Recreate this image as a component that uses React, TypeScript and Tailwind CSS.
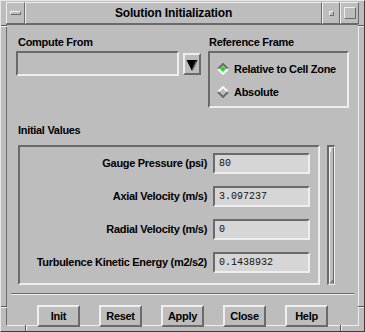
import React from "react";

const label = "whitespace-nowrap text-[11px] font-bold leading-[13px] tracking-[-0.3px] text-black";
const raised = "border-[#eeeeee] border-r-[#6a6a6a] border-b-[#6a6a6a]";
const sunken = "border-[#6a6a6a] border-r-[#eeeeee] border-b-[#eeeeee]";

const initialValues: [string, string][] = [
  ["Gauge Pressure (psi)", "80"],
  ["Axial Velocity (m/s)", "3.097237"],
  ["Radial Velocity (m/s)", "0"],
  ["Turbulence Kinetic Energy (m2/s2)", "0.1438932"],
];

function Diamond({ selected }: { selected?: boolean }) {
  const tl = selected ? "#6a6a6a" : "#f4f4f4";
  const br = selected ? "#f4f4f4" : "#6a6a6a";
  return (
    <svg width="12" height="12" viewBox="0 0 12 12" className="shrink-0">
      <polygon points="6,1 11,6 6,11 1,6" fill={selected ? "#c4c4c4" : "#bdbdbd"} />
      <polyline points="1,6 6,1 11,6" fill="none" stroke={tl} strokeWidth="2" />
      <polyline points="1,6 6,11 11,6" fill="none" stroke={br} strokeWidth="2" />
      {selected && <polygon points="6,3.5 8.5,6 6,8.5 3.5,6" fill="#00ee00" />}
    </svg>
  );
}

function FrameTicks() {
  return (
    <>
      {/* resize handle marks on the window frame */}
      <div className="absolute left-0 top-[24px] h-[1px] w-[6px] bg-[#5a5a5a]" />
      <div className="absolute left-0 top-[25px] h-[1px] w-[6px] bg-[#eeeeee]" />
      <div className="absolute left-0 top-[305px] h-[1px] w-[6px] bg-[#5a5a5a]" />
      <div className="absolute left-0 top-[306px] h-[1px] w-[6px] bg-[#eeeeee]" />
      <div className="absolute right-0 top-[24px] h-[1px] w-[6px] bg-[#5a5a5a]" />
      <div className="absolute right-0 top-[25px] h-[1px] w-[6px] bg-[#eeeeee]" />
      <div className="absolute right-0 top-[305px] h-[1px] w-[6px] bg-[#5a5a5a]" />
      <div className="absolute right-0 top-[306px] h-[1px] w-[6px] bg-[#eeeeee]" />
      <div className="absolute bottom-0 left-[24px] h-[6px] w-[1px] bg-[#5a5a5a]" />
      <div className="absolute bottom-0 left-[25px] h-[6px] w-[1px] bg-[#eeeeee]" />
      <div className="absolute bottom-0 left-[339px] h-[6px] w-[1px] bg-[#5a5a5a]" />
      <div className="absolute bottom-0 left-[340px] h-[6px] w-[1px] bg-[#eeeeee]" />
    </>
  );
}

function TitleBar() {
  return (
    <div className="flex h-[22px]">
      <div className={`flex w-[19px] items-center justify-center border ${raised}`}>
        <div className={`h-[4px] w-[11px] border ${raised}`} />
      </div>
      <div
        className={`flex flex-1 items-center justify-center border ${raised} text-[12px] font-bold tracking-[-0.15px] text-black`}
      >
        Solution Initialization
      </div>
      <div className={`flex w-[18px] items-center justify-center border ${raised}`}>
        <div className={`h-[5px] w-[5px] border ${raised}`} />
      </div>
      <div className={`flex w-[19px] items-center justify-center border ${raised}`}>
        <div className={`h-[12px] w-[12px] border ${raised}`} />
      </div>
    </div>
  );
}

function DropButton() {
  return (
    <div className={`ml-[4px] h-[22px] w-[18px] border-2 ${raised}`}>
      <svg width="14" height="18" viewBox="0 0 14 18">
        <polygon points="1.5,5 12.5,5 7,16" fill="#000" />
        <polyline points="11.5,6 7.5,14.5" fill="none" stroke="#5f5f5f" strokeWidth="1.5" />
      </svg>
    </div>
  );
}

function ValueRow({ name, value }: { name: string; value: string }) {
  return (
    <div className="flex items-center gap-[6px]">
      <span className={label}>{name}</span>
      <div
        className={`h-[21px] w-[97px] border-2 ${sunken} bg-[#d6d6d6] pl-[4px] font-['Liberation_Mono',monospace] text-[10px] leading-[17px] text-[#111]`}
      >
        {value}
      </div>
    </div>
  );
}

function ScrollBar() {
  return (
    <div className={`ml-[7px] flex h-[140px] w-[8px] border-2 border-r border-b ${sunken}`}>
      <div className={`relative h-full w-full border-l border-r ${raised}`}>
        <svg className="absolute left-0 top-0" width="4" height="6" viewBox="0 0 4 6">
          <polyline points="0.5,5 0.5,0.5 3.5,0.5" fill="none" stroke="#eeeeee" strokeWidth="1" />
        </svg>
        <svg className="absolute bottom-0 left-0" width="4" height="6" viewBox="0 0 4 6">
          <polyline points="0.5,5.5 3.5,2" fill="none" stroke="#6a6a6a" strokeWidth="1.2" />
        </svg>
      </div>
    </div>
  );
}

const buttons = ["Init", "Reset", "Apply", "Close", "Help"];

export default function App() {
  return (
    <div
      className="relative h-[332px] w-[365px] overflow-hidden border border-[#e6e6e6] border-r-[#3c3c3c] border-b-[#3c3c3c] bg-[#bdbdbd] px-[5px] pt-[1px] pb-[5px] font-['Liberation_Sans',Arial,sans-serif]"
    >
      <FrameTicks />
      <TitleBar />

      <div className={`flex h-[302px] flex-col border ${sunken}`}>
        <div className="flex gap-[7px] pl-[9px] pt-[11px]">
          <div className="flex w-[185px] flex-col">
            <span className={`${label} ml-[2px]`}>Compute From</span>
            <div className="mt-[2px] flex items-center">
              <div className={`h-[25px] w-[163px] border-2 ${sunken}`} />
              <DropButton />
            </div>
          </div>

          <div className="flex w-[141px] flex-col">
            <span className={`${label} ml-[1px]`}>Reference Frame</span>
            <div className={`mt-[2px] flex h-[57px] flex-col gap-[7px] border-2 ${sunken} pl-[7px] pt-[8px]`}>
              <div className="flex h-[16px] items-center gap-[5px]">
                <Diamond selected />
                <span className={label}>Relative to Cell Zone</span>
              </div>
              <div className="flex h-[16px] items-center gap-[5px]">
                <Diamond />
                <span className={label}>Absolute</span>
              </div>
            </div>
          </div>
        </div>

        <div className="mt-[9px] pl-[11px]">
          <span className={label}>Initial Values</span>
          <div className="mt-[4px] flex">
            <div
              className={`flex h-[140px] w-[302px] flex-col items-end gap-[12px] overflow-hidden border-2 ${sunken} pr-[8px] pt-[6px]`}
            >
              {initialValues.map(([name, value]) => (
                <ValueRow key={name} name={name} value={value} />
              ))}
            </div>
            <ScrollBar />
          </div>
        </div>

        <div className="mx-[4px] mt-[8px] h-[2px] border-t border-b border-t-[#6a6a6a] border-b-[#eeeeee]" />

        <div className="mt-[10px] flex justify-center gap-[19px]">
          {buttons.map((b) => (
            <div
              key={b}
              className={`flex h-[22px] w-[43px] items-center justify-center border-2 ${raised} ${label}`}
            >
              {b}
            </div>
          ))}
        </div>
      </div>
    </div>
  );
}
